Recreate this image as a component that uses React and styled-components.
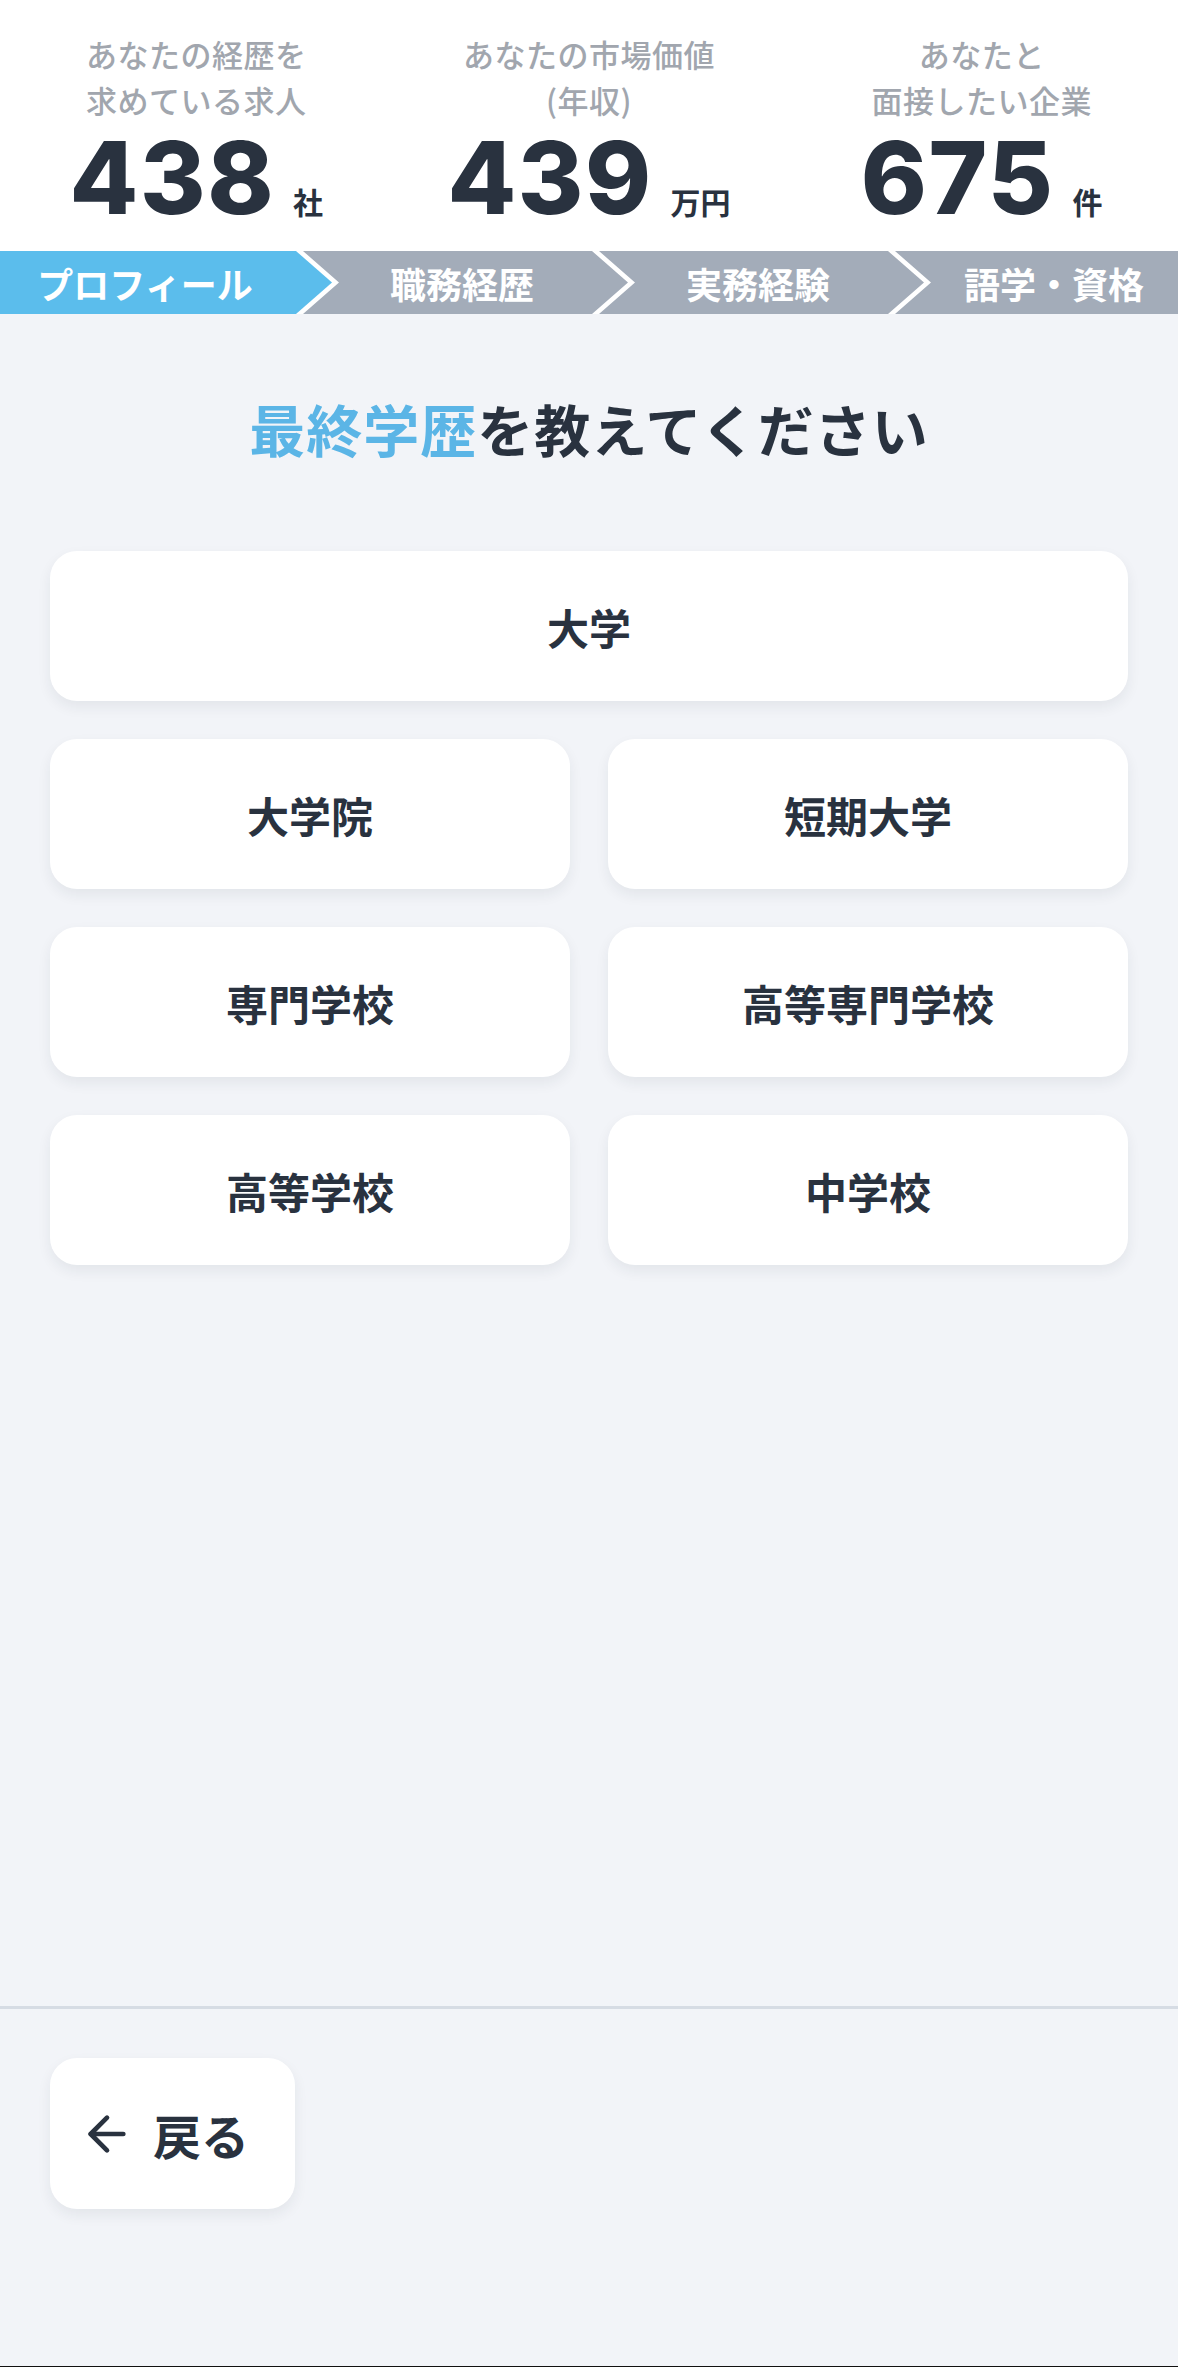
import styled, { createGlobalStyle } from 'styled-components';
import { ArrowLeft } from 'lucide-react';

const GlobalStyle = createGlobalStyle`
  *, *::before, *::after { box-sizing: border-box; }
  body {
    margin: 0;
    background: #f2f4f8;
    font-family: "Noto Sans CJK JP", "Noto Sans", sans-serif;
    color: #29323f;
  }
`;

const Page = styled.div`
  min-height: 2367px;
  display: flex;
  flex-direction: column;
  border-bottom: 1px solid #111;
`;

const Top = styled.header`
  background: #fff;
`;

const Stats = styled.div`
  display: grid;
  grid-template-columns: repeat(3, 1fr);
  padding: 31px 0 30px;
`;

const Stat = styled.div`
  display: flex;
  flex-direction: column;
  align-items: center;
`;

const StatLabel = styled.div`
  font-size: 31px;
  line-height: 46px;
  font-weight: 500;
  letter-spacing: 0.5px;
  color: #a1a6ae;
  text-align: center;
`;

const StatValue = styled.div`
  display: flex;
  align-items: baseline;
  gap: 18px;
  margin-top: 15px;
`;

const Figure = styled.span`
  font-family: Inter, "Liberation Sans", sans-serif;
  font-weight: 800;
  font-size: 100px;
  line-height: 80px;
  letter-spacing: 1.5px;
  color: #29323f;
`;

const Unit = styled.span`
  font-size: 30px;
  line-height: 40px;
  font-weight: 700;
  color: #29323f;
`;

const Steps = styled.nav`
  display: flex;
  height: 63px;
  overflow: hidden;
`;

const Step = styled.div`
  flex: 0 0 332px;
  margin-left: ${p => (p.$first ? '0' : '-36px')};
  padding-right: ${p => (p.$first ? '42px' : '0')};
  background: ${p => (p.$active ? '#5bbdec' : '#a3acb9')};
  clip-path: ${p =>
    p.$first
      ? 'polygon(0 0, 296px 0, 332px 50%, 296px 100%, 0 100%)'
      : 'polygon(7px 0, 296px 0, 332px 50%, 296px 100%, 7px 100%, 43px 50%)'};
  display: flex;
  align-items: center;
  justify-content: center;
  color: #fff;
  font-size: 36px;
  font-weight: 700;
  white-space: nowrap;
`;

const Main = styled.main`
  flex: 1;
  padding: 74px 50px 0;
`;

const Title = styled.h1`
  margin: 0;
  text-align: center;
  font-size: 56px;
  line-height: 80px;
  letter-spacing: 1px;
  font-weight: 700;
  color: #29323f;
`;

const Accent = styled.span`
  color: #5bb5e6;
`;

const Options = styled.div`
  display: grid;
  grid-template-columns: 1fr 1fr;
  gap: 38px;
  margin-top: 83px;
`;

const Card = styled.button`
  grid-column: ${p => (p.$wide ? '1 / -1' : 'auto')};
  height: 150px;
  border: 0;
  border-radius: 27px;
  background: #fff;
  box-shadow: 0 6px 14px rgba(30, 40, 60, 0.07);
  font-family: inherit;
  font-size: 42px;
  font-weight: 700;
  color: #29323f;
  cursor: pointer;
`;

const Footer = styled.footer`
  height: 360px;
  border-top: 3px solid #d6dce4;
  padding: 49px 50px 0;
`;

const BackButton = styled(Card)`
  width: 245px;
  height: 151px;
  display: flex;
  align-items: center;
  gap: 18px;
  padding-left: 29px;
  font-size: 48px;
`;

const stats = [
  { label: ['あなたの経歴を', '求めている求人'], value: '438', unit: '社' },
  { label: ['あなたの市場価値', '(年収)'], value: '439', unit: '万円' },
  { label: ['あなたと', '面接したい企業'], value: '675', unit: '件' },
];

const steps = ['プロフィール', '職務経歴', '実務経験', '語学・資格'];

const options = ['大学院', '短期大学', '専門学校', '高等専門学校', '高等学校', '中学校'];

export default function App() {
  return (
    <Page>
      <GlobalStyle />
      <Top>
        <Stats>
          {stats.map(s => (
            <Stat key={s.value}>
              <StatLabel>
                {s.label[0]}
                <br />
                {s.label[1]}
              </StatLabel>
              <StatValue>
                <Figure>{s.value}</Figure>
                <Unit>{s.unit}</Unit>
              </StatValue>
            </Stat>
          ))}
        </Stats>
        <Steps>
          {steps.map((s, i) => (
            <Step key={s} $first={i === 0} $active={i === 0}>
              {s}
            </Step>
          ))}
        </Steps>
      </Top>
      <Main>
        <Title>
          <Accent>最終学歴</Accent>を教えてください
        </Title>
        <Options>
          <Card $wide>大学</Card>
          {options.map(o => (
            <Card key={o}>{o}</Card>
          ))}
        </Options>
      </Main>
      <Footer>
        <BackButton>
          <ArrowLeft size={56} strokeWidth={2} />
          戻る
        </BackButton>
      </Footer>
    </Page>
  );
}
